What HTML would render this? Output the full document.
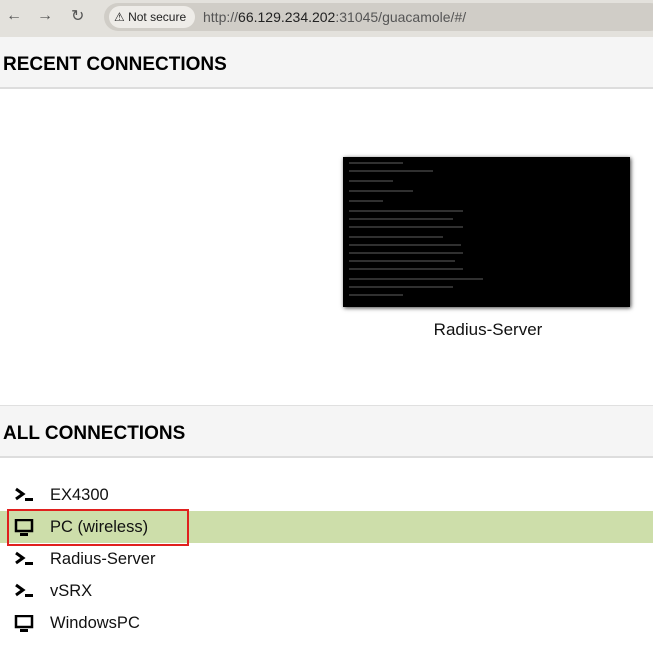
<!DOCTYPE html>
<html><head><style>
body{margin:0;width:653px;height:667px;overflow:hidden;background:#fff;font-family:"Liberation Sans",sans-serif;position:relative}
.bar{position:absolute;left:0;top:0;width:653px;height:37px;background:#e3e1dc}
.url{position:absolute;left:104px;top:3px;width:560px;height:28px;border-radius:14px;background:#d0cdc7}
.ns{position:absolute;left:109px;top:6px;width:86px;height:22px;border-radius:11px;background:#eeece8;font-size:12px;line-height:22px;color:#222}
.hdr{position:absolute;left:0;width:653px;background:#f5f5f5;border-bottom:2px solid #ddd;font-weight:bold;font-size:19px;color:#000}
.row{position:absolute;left:0;width:653px;height:32px;font-size:16.5px;line-height:32px;color:#111}
.row span{position:absolute;left:50px}
.ic{position:absolute;left:14px;top:8px}
</style></head><body>
<div class="bar">
<div style="position:absolute;left:6px;top:7px;font-size:16px;color:#555">←</div>
<div style="position:absolute;left:37px;top:7px;font-size:16px;color:#555">→</div>
<div style="position:absolute;left:71px;top:6px;font-size:16px;color:#555">↻</div>
<div class="url"></div>
<div class="ns"><span style="margin-left:5px">⚠ Not secure</span></div>
<div style="position:absolute;left:203px;top:9px;font-size:14px;color:#555">http://<span style="color:#222">66.129.234.202</span>:31045/guacamole/#/</div>
</div>
<div class="hdr" style="top:37px;height:52px;line-height:56px;padding-left:3px;box-sizing:border-box">RECENT CONNECTIONS</div>
<div style="position:absolute;left:343px;top:157px;width:287px;height:150px;background:#000;box-shadow:1px 1px 4px #444">
<svg width="287" height="150"><g stroke="#888" stroke-width="1" opacity=".7">
<line x1="6" y1="6" x2="60" y2="6"/><line x1="6" y1="14" x2="90" y2="14"/><line x1="6" y1="24" x2="50" y2="24"/><line x1="6" y1="34" x2="70" y2="34"/><line x1="6" y1="44" x2="40" y2="44"/><line x1="6" y1="54" x2="120" y2="54"/><line x1="6" y1="62" x2="110" y2="62"/><line x1="6" y1="70" x2="120" y2="70"/><line x1="6" y1="80" x2="100" y2="80"/><line x1="6" y1="88" x2="118" y2="88"/><line x1="6" y1="96" x2="120" y2="96"/><line x1="6" y1="104" x2="112" y2="104"/><line x1="6" y1="112" x2="120" y2="112"/><line x1="6" y1="122" x2="140" y2="122"/><line x1="6" y1="130" x2="110" y2="130"/><line x1="6" y1="138" x2="60" y2="138"/></g></svg></div>
<div style="position:absolute;left:343px;width:290px;top:320px;text-align:center;font-size:17px;color:#111">Radius-Server</div>
<div class="hdr" style="top:405px;height:53px;line-height:56px;padding-left:3px;box-sizing:border-box;border-top:1px solid #e0e0e0">ALL CONNECTIONS</div>
<div class="row" style="top:479px"><svg class="ic" width="22" height="16"><path d="M2 2l7 5-7 5" fill="none" stroke="#000" stroke-width="3"/><rect x="11" y="11" width="8" height="3"/></svg><span>EX4300</span></div>
<div class="row" style="top:511px;background:#cddeaa"><svg class="ic" width="22" height="18"><rect x="2" y="1" width="16" height="11" fill="none" stroke="#000" stroke-width="2.5"/><rect x="6" y="14" width="8" height="3"/></svg><span>PC (wireless)</span></div>
<div style="position:absolute;left:7px;top:509px;width:178px;height:33px;border:2px solid #e0201e"></div>
<div class="row" style="top:543px"><svg class="ic" width="22" height="16"><path d="M2 2l7 5-7 5" fill="none" stroke="#000" stroke-width="3"/><rect x="11" y="11" width="8" height="3"/></svg><span>Radius-Server</span></div>
<div class="row" style="top:575px"><svg class="ic" width="22" height="16"><path d="M2 2l7 5-7 5" fill="none" stroke="#000" stroke-width="3"/><rect x="11" y="11" width="8" height="3"/></svg><span>vSRX</span></div>
<div class="row" style="top:607px"><svg class="ic" width="22" height="18"><rect x="2" y="1" width="16" height="11" fill="none" stroke="#000" stroke-width="2.5"/><rect x="6" y="14" width="8" height="3"/></svg><span>WindowsPC</span></div>
</body></html>
